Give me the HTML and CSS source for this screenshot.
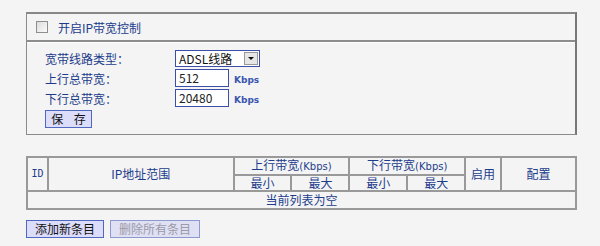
FILE: index.html
```html
<!DOCTYPE html>
<html lang="zh-CN">
<head>
  <meta charset="UTF-8">
  <title>IP带宽控制</title>
  <link rel="stylesheet" href="styles.css">
</head>
<body>
  <div class="page">
    <div class="panel">
      <div class="panel-head">
        <span class="check"></span>
        <span>开启IP带宽控制</span>
      </div>
      <div class="panel-body">
        <div class="row">
          <label>宽带线路类型：</label>
          <div class="select">ADSL线路<span class="arrow"><i></i></span></div>
        </div>
        <div class="row">
          <label>上行总带宽：</label>
          <div class="field">512</div>
          <span class="unit">Kbps</span>
        </div>
        <div class="row">
          <label>下行总带宽：</label>
          <div class="field">20480</div>
          <span class="unit">Kbps</span>
        </div>
        <button class="btn save">保 存</button>
      </div>
    </div>

    <table class="list">
      <tr>
        <th rowspan="2" class="c-id">ID</th>
        <th rowspan="2" class="c-ip">IP地址范围</th>
        <th colspan="2">上行带宽<span class="kb">(Kbps)</span></th>
        <th colspan="2">下行带宽<span class="kb">(Kbps)</span></th>
        <th rowspan="2" class="c-on">启用</th>
        <th rowspan="2" class="c-cfg">配置</th>
      </tr>
      <tr>
        <th class="c-n">最小</th>
        <th class="c-n">最大</th>
        <th class="c-n">最小</th>
        <th class="c-n">最大</th>
      </tr>
      <tr>
        <td colspan="8" class="empty">当前列表为空</td>
      </tr>
    </table>

    <div class="actions">
      <button class="btn">添加新条目</button>
      <button class="btn" disabled>删除所有条目</button>
    </div>
  </div>
</body>
</html>
```

FILE: styles.css
```css
body {
  margin: 0;
  background: #f4f4f4;
  font-family: "Noto Sans CJK SC", "DejaVu Sans", sans-serif;
  font-size: 12px;
  color: #1c3c8c;
}
.page {
  padding: 12px 0 0 26px;
  width: 551px;
}
.panel {
  border: 1px solid #8a8a8a;
  border-right: 2px solid #777;
  border-top: 2px solid #888;
  height: 120px;
}
.panel-head {
  display: flex;
  align-items: center;
  height: 26px;
  padding-left: 9px;
  border-bottom: 2px solid #8c8c8c;
  box-shadow: 0 1px 0 #fff;
}
.check {
  width: 10px;
  height: 10px;
  border: 1px solid #8e8e8e;
  background: linear-gradient(135deg, #dcdcdc, #fafafa);
  margin-right: 10px;
}
.panel-body {
  padding: 6px 0 0 18px;
}
.row {
  display: flex;
  align-items: center;
  height: 20px;
}
.row label {
  width: 130px;
}
.select {
  position: relative;
  width: 80px;
  height: 15px;
  line-height: 15px;
  border: 1px solid #3c4ea8;
  background: #fff;
  color: #111;
  padding-left: 3px;
  box-sizing: content-box;
}
.arrow {
  position: absolute;
  right: 1px;
  top: 1px;
  width: 14px;
  height: 13px;
  background: #e6e6e6;
  border: 1px solid #999;
  box-sizing: border-box;
}
.arrow i {
  position: absolute;
  left: 3px;
  top: 4px;
  border-left: 3px solid transparent;
  border-right: 3px solid transparent;
  border-top: 3px solid #111;
}
.field {
  width: 49px;
  height: 16px;
  line-height: 16px;
  border: 1px solid #3c4ea8;
  background: #fff;
  color: #222;
  padding-left: 3px;
}
.unit {
  font-family: "DejaVu Sans", sans-serif;
  font-weight: bold;
  font-size: 9px;
  margin: 4px 0 0 5px;
  color: #3a56b0;
}
.btn {
  font-family: "Noto Sans CJK SC", sans-serif;
  font-size: 12px;
  height: 18px;
  line-height: 14px;
  padding: 0 8px;
  background: #dcdcfb;
  border: 1px solid #5068c0;
  color: #111;
  border-radius: 0;
  margin: 0;
}
.btn:disabled {
  color: #9a9aa8;
  background: #e0e0f4;
  border-color: #8c9ad0;
}
.save {
  margin-top: 2px;
  width: 47px;
  padding: 0;
  letter-spacing: 4px;
  text-indent: 4px;
}
.list {
  margin-top: 21px;
  width: 551px;
  border-collapse: collapse;
  border: 2px solid #888;
}
.list th,
.list td {
  border: 2px solid #999;
  font-weight: normal;
  height: 14px;
  padding: 0;
  text-align: center;
  line-height: 14px;
}
.list .kb {
  font-family: "DejaVu Sans", sans-serif;
  font-size: 10px;
}
.c-id { width: 19px; font-family: "DejaVu Sans Mono", monospace; font-size: 10px; }
.c-ip { width: 184px; }
.c-n { width: 56px; }
.c-on { width: 34px; }
.c-cfg { width: 73px; }
.list .empty {
  height: 16px;
}
.actions {
  display: flex;
  gap: 6px;
  margin-top: 10px;
}
```
